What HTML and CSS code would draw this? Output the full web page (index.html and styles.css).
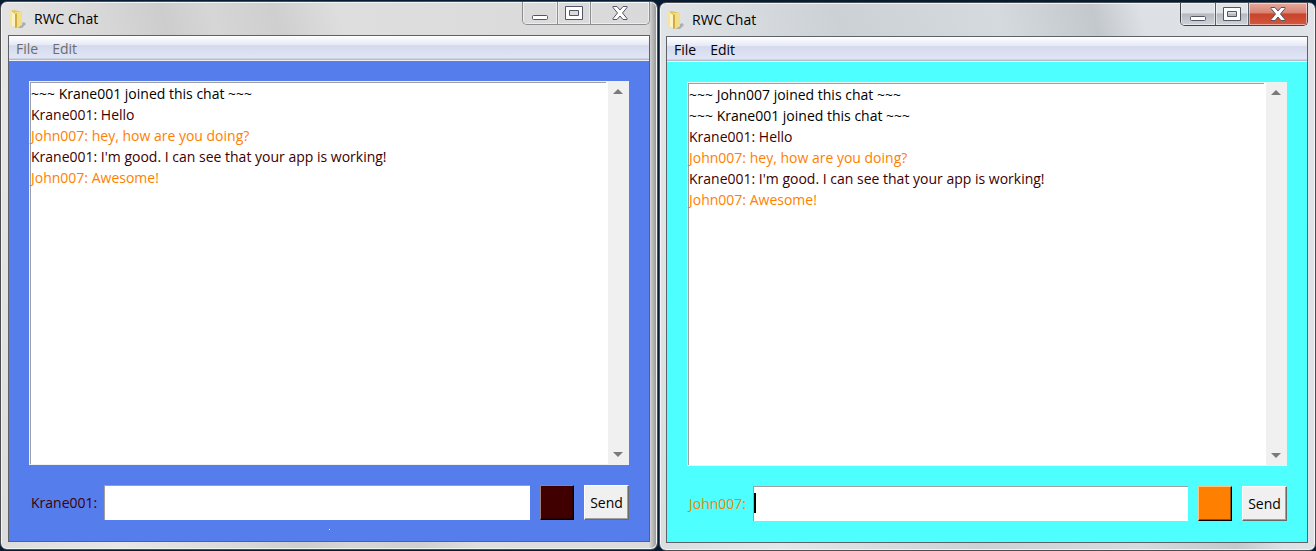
FILE: index.html
```html
<!DOCTYPE html>
<html lang="en">
<head>
<meta charset="utf-8">
<title>RWC Chat</title>
<link rel="stylesheet" href="styles.css">
</head>
<body>
<main class="desktop">
  <section class="window window--inactive" aria-label="RWC Chat, Krane001">
    <header class="titlebar">
      <svg class="app-icon" width="18" height="19" viewBox="0 0 18 19" aria-hidden="true">
        <path d="M10 15l5-3 2 2-4 4H9z" fill="#7c8694" opacity=".55"/>
        <path d="M1 1l4-1 8 2v13l-5 3-7-3z" fill="#e3c55f"/>
        <path d="M6 2l7 0v13l-5 3z" fill="#f2df85"/>
        <path d="M0 1l3 0v15l-3-1z" fill="#f4e5a0"/>
        <path d="M3 2l3 2v13l-3-1z" fill="#fbf2c6"/>
        <path d="M6 4l2-1v14l-2 1z" fill="#d0ab3f"/>
      </svg>
      <h1 class="title">RWC Chat</h1>
      <div class="caption">
        <button class="caption-btn caption-btn--min" type="button" aria-label="Minimize"><svg width="18" height="16" viewBox="0 0 18 16"><rect x="1.500" y="10.500" width="15" height="4" rx="1" fill="#fff" stroke="#535666"/></svg></button>
        <button class="caption-btn caption-btn--max" type="button" aria-label="Maximize"><svg width="18" height="16" viewBox="0 0 18 16"><path fill-rule="evenodd" d="M.5 1.500h17v13H.5zM4.500 5.500v5h9v-5z" fill="#fff" stroke="#535666"/></svg></button>
        <button class="caption-btn caption-btn--close" type="button" aria-label="Close"><svg width="18" height="16" viewBox="0 0 18 16"><path d="M2 1.500h4l3 3.500 3-3.500h4v1l-4.500 5.500 4.500 5.500v1h-4L9 11l-3 3.500H2v-1l4.500-5.500L2 2.500z" fill="#fff" stroke="#535666" stroke-linejoin="round"/></svg></button>
      </div>
    </header>
    <div class="client client--blue">
      <nav class="menubar"><button class="menu" type="button">File</button><button class="menu" type="button">Edit</button></nav>
      <div class="chat">
        <div class="history">
          <div class="log" role="log">
            <p class="line">~~~ Krane001 joined this chat ~~~</p>
            <p class="line line--krane">Krane001: Hello</p>
            <p class="line line--john">John007: hey, how are you doing?</p>
            <p class="line line--krane">Krane001: I'm good. I can see that your app is working!</p>
            <p class="line line--john">John007: Awesome!</p>
          </div>
          <div class="scrollbar">
            <button class="arrow" type="button" aria-label="Scroll up"><svg width="10" height="5" viewBox="0 0 10 5"><path d="M0 5l5-5 5 5z" fill="#7a7a7a"/></svg></button>
            <button class="arrow" type="button" aria-label="Scroll down"><svg width="10" height="5" viewBox="0 0 10 5"><path d="M0 0l5 5 5-5z" fill="#7a7a7a"/></svg></button>
          </div>
        </div>
        <form class="composer">
          <label class="user line--krane" for="msg-krane">Krane001:</label>
          <input class="message" id="msg-krane" type="text">
          <button class="swatch swatch--maroon" type="button" aria-label="Text colour"></button>
          <button class="send" type="button">Send</button>
        </form>
        <span class="speck"></span>
      </div>
    </div>
  </section>

  <section class="window window--active" aria-label="RWC Chat, John007">
    <header class="titlebar">
      <svg class="app-icon" width="18" height="19" viewBox="0 0 18 19" aria-hidden="true">
        <path d="M10 15l5-3 2 2-4 4H9z" fill="#7c8694" opacity=".55"/>
        <path d="M1 1l4-1 8 2v13l-5 3-7-3z" fill="#e3c55f"/>
        <path d="M6 2l7 0v13l-5 3z" fill="#f2df85"/>
        <path d="M0 1l3 0v15l-3-1z" fill="#f4e5a0"/>
        <path d="M3 2l3 2v13l-3-1z" fill="#fbf2c6"/>
        <path d="M6 4l2-1v14l-2 1z" fill="#d0ab3f"/>
      </svg>
      <h1 class="title">RWC Chat</h1>
      <div class="caption">
        <button class="caption-btn caption-btn--min" type="button" aria-label="Minimize"><svg width="18" height="16" viewBox="0 0 18 16"><rect x="1.500" y="10.500" width="15" height="4" rx="1" fill="#fff" stroke="#535666"/></svg></button>
        <button class="caption-btn caption-btn--max" type="button" aria-label="Maximize"><svg width="18" height="16" viewBox="0 0 18 16"><path fill-rule="evenodd" d="M.5 1.500h17v13H.5zM4.500 5.500v5h9v-5z" fill="#fff" stroke="#535666"/></svg></button>
        <button class="caption-btn caption-btn--close" type="button" aria-label="Close"><svg width="18" height="16" viewBox="0 0 18 16"><path d="M2 1.500h4l3 3.500 3-3.500h4v1l-4.500 5.500 4.500 5.500v1h-4L9 11l-3 3.500H2v-1l4.500-5.500L2 2.500z" fill="#fff" stroke="#535666" stroke-linejoin="round"/></svg></button>
      </div>
    </header>
    <div class="client client--cyan">
      <nav class="menubar"><button class="menu" type="button">File</button><button class="menu" type="button">Edit</button></nav>
      <div class="chat">
        <div class="history">
          <div class="log" role="log">
            <p class="line">~~~ John007 joined this chat ~~~</p>
            <p class="line">~~~ Krane001 joined this chat ~~~</p>
            <p class="line line--krane">Krane001: Hello</p>
            <p class="line line--john">John007: hey, how are you doing?</p>
            <p class="line line--krane">Krane001: I'm good. I can see that your app is working!</p>
            <p class="line line--john">John007: Awesome!</p>
          </div>
          <div class="scrollbar">
            <button class="arrow" type="button" aria-label="Scroll up"><svg width="10" height="5" viewBox="0 0 10 5"><path d="M0 5l5-5 5 5z" fill="#7a7a7a"/></svg></button>
            <button class="arrow" type="button" aria-label="Scroll down"><svg width="10" height="5" viewBox="0 0 10 5"><path d="M0 0l5 5 5-5z" fill="#7a7a7a"/></svg></button>
          </div>
        </div>
        <form class="composer">
          <label class="user line--john" for="msg-john">John007:</label>
          <input class="message message--focused" id="msg-john" type="text">
          <button class="swatch swatch--orange" type="button" aria-label="Text colour"></button>
          <button class="send" type="button">Send</button>
        </form>
      </div>
    </div>
  </section>
</main>
</body>
</html>
```

FILE: styles.css
```css
* { box-sizing: border-box; }

body {
  margin: 0;
  background: #061c33;
  color: #000;
  font: 14px/21px "Open Sans", "Noto Sans", sans-serif;
}

button, input { font: inherit; color: inherit; padding: 0; margin: 0; }

.desktop {
  display: grid;
  grid-template-columns: 1fr 1fr;
  height: 100vh;
}

.window {
  display: flex;
  flex-direction: column;
  border: 1px solid #4c4e52;
  border-radius: 7px;
  box-shadow: inset 0 0 0 1px #f4f4f4;
}

.window--inactive {
  margin: 1px 0;
  padding: 0 7px 7px;
  background:
    linear-gradient(90deg, #0000 calc(100% - 8px), #0005),
    linear-gradient(75deg, #dcdcdc, #e6e6e6 15%, #d8d8d8 30%, #cdcdcd 38%, #d6d6d6 44%, #cfcfcf 52%, #dedede 60%, #d9d9d9);
}

.window--active {
  margin: 2px 0 0 1px;
  padding: 0 7px 7px 6px;
  background: linear-gradient(75deg, #d8dde0, #e2e6e9 15%, #ccd1d5 40%, #d4dade 60%, #c3c8cd 72%, #dde1e5 78%, #e0e3e8);
}

.titlebar {
  display: flex;
  align-items: flex-start;
  flex: none;
  height: 33px;
}

.app-icon { margin: 8px 7px 0 1px; }

.title { margin: 6px 0 0; font-size: 14px; font-weight: 400; }

.caption {
  display: flex;
  margin-left: auto;
  height: 23px;
  border: 1px solid #8c8e92;
  border-top: 0;
  border-radius: 0 0 5px 5px;
  overflow: hidden;
}

.caption-btn {
  display: grid;
  place-items: center;
  width: 35px;
  border: 0;
  border-right: 1px solid #8c8e92;
  background: transparent;
  box-shadow: inset 0 0 0 1px #ffffff80;
}

.caption-btn--max { width: 33px; }
.caption-btn--close { width: 58px; border-right: 0; }

.window--active .caption { border-color: #41444c; }

.window--active .caption-btn {
  border-color: #5a5e68;
  background: linear-gradient(#dfe2e6 45%, #b4b9c0 50%, #cfd3d9);
}

.window--active .caption-btn--close {
  background: linear-gradient(#e8a99d, #d98272 45%, #c8432b 50%, #d4583e);
}

.client {
  display: flex;
  flex-direction: column;
  flex: 1;
  border: 1px solid #5e6268;
}

.client--blue { background: #557dec; }
.client--cyan { background: #4dffff; }

.menubar {
  display: flex;
  height: 25px;
  border-bottom: 1px solid #f0f0f4;
  background: linear-gradient(#fff, #e6eaf5 36%, #d4daed 40%, #e1e6f6 92%, #b6bccc 96%);
}

.menu { border: 0; padding: 0 7px; background: transparent; }
.window--inactive .menu { color: #6d6d6d; }

.chat {
  position: relative;
  display: flex;
  flex-direction: column;
  gap: 20px;
  flex: 1;
  padding: 20px 20px 21px;
}

.history {
  display: flex;
  flex: 1;
  border: 1px solid #f0f0f0;
  background: #fff;
}

.log {
  flex: 1;
  border: solid #a0a0a0;
  border-width: 1px 0 0 1px;
  margin-right: 2px;
}

.line { margin: 0; }
.line--krane { color: #400000; }
.line--john { color: #ff8000; }

.scrollbar {
  display: flex;
  flex-direction: column;
  justify-content: space-between;
  width: 20px;
  background: #f0f0f0;
}

.arrow { display: grid; place-items: center; height: 19px; border: 0; background: transparent; }

.composer { display: flex; gap: 10px; height: 35px; }

.user { margin: 0 -3px 0 2px; line-height: 35px; }

.message {
  flex: 1;
  min-width: 0;
  border: solid #a0a0a0;
  border-width: 1px 0 0 1px;
  background: #fff;
  outline: 0;
}

.message--focused {
  background: linear-gradient(#000, #000) 0 6px / 2px 20px no-repeat #fff;
}

.swatch { width: 34px; border: 1px solid; }
.swatch--maroon { background: #400000; border-color: #a08080 #000 #000 #a08080; }
.swatch--orange { background: #ff8000; border-color: #ffc080 #000 #000 #ffc080; }
.swatch { box-shadow: inset -1px -1px #0006; }

.send {
  width: 45px;
  border: 1px solid;
  border-color: #fff #696969 #696969 #fff;
  background: #f0f0f0;
  box-shadow: inset -1px -1px #a0a0a0;
}

.speck {
  position: absolute;
  left: 50%;
  bottom: 11px;
  width: 1px;
  height: 1px;
  background: #fff;
}
```
